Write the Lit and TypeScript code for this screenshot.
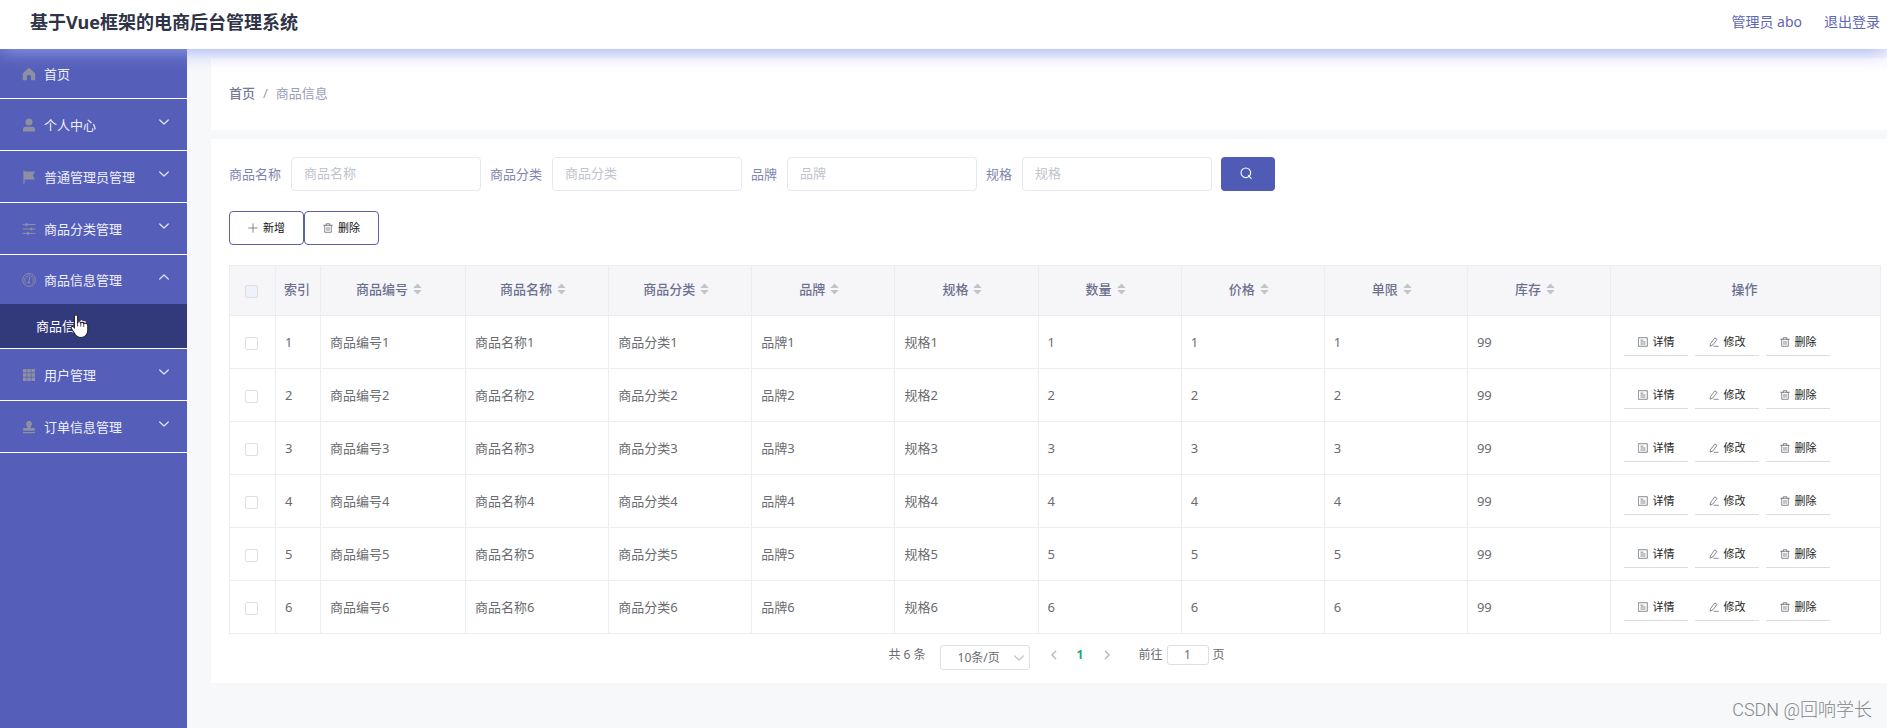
import { LitElement, html, css, svg } from "lit";
import { customElement, state } from "lit/decorators.js";

interface MenuItem {
  label: string;
  icon: string;
  open?: boolean;
  leaf?: boolean;
  children?: string[];
}

const MENU: MenuItem[] = [
  { label: "首页", icon: "home", leaf: true },
  { label: "个人中心", icon: "user" },
  { label: "普通管理员管理", icon: "flag" },
  { label: "商品分类管理", icon: "sliders" },
  { label: "商品信息管理", icon: "gauge", open: true, children: ["商品信息"] },
  { label: "用户管理", icon: "grid" },
  { label: "订单信息管理", icon: "stamp" },
];

const FILTERS = ["商品名称", "商品分类", "品牌", "规格"];
const COLUMNS = ["商品编号", "商品名称", "商品分类", "品牌", "规格", "数量", "价格", "单限", "库存"];
const ROWS = [1, 2, 3, 4, 5, 6].map((n) => [
  `商品编号${n}`, `商品名称${n}`, `商品分类${n}`, `品牌${n}`, `规格${n}`, `${n}`, `${n}`, `${n}`, "99",
]);

const stroke = (d: string, w = 1) => svg`<path d=${d} fill="none" stroke="currentColor" stroke-width=${w} stroke-linecap="round" stroke-linejoin="round"/>`;
const fill = (d: string) => svg`<path d=${d} fill="currentColor"/>`;

const GLYPHS: Record<string, unknown> = {
  home: fill("M7 .8 13.2 6.2V13.2H9V9.4Q9 8 7 8 5 8 5 9.4V13.2H.8V6.2Z"),
  user: svg`<circle cx="7" cy="4" r="3.5" fill="currentColor"/>${fill("M1 13.4V11.6Q1 8.8 3.6 8.8H10.4Q13 8.8 13 11.6V13.4Z")}`,
  flag: fill("M1.4 .4H2.6V1.4H13L10.8 5.4 13 9.4H2.6V13.8H1.4Z"),
  sliders: svg`${stroke("M1 2.6H13M1 7H13M1 11.4H13", 1)}${stroke("M4.5 2V3.2M9.5 6.4V7.6M6 10.8V12", 2)}`,
  gauge: svg`<circle cx="7" cy="7" r="6.4" fill="none" stroke="currentColor"/>${stroke("M4 10.4A4.4 4.4 0 1 1 10 10.4", 0.8)}${stroke("M7.6 4.4 7 9", 1)}<circle cx="6.6" cy="9.6" r="1.1" fill="currentColor"/>`,
  grid: fill("M1 1H4.6V4.6H1ZM5.2 1H8.8V4.6H5.2ZM9.4 1H13V4.6H9.4ZM1 5.2H4.6V8.8H1ZM5.2 5.2H8.8V8.8H5.2ZM9.4 5.2H13V8.8H9.4ZM1 9.4H4.6V13H1ZM5.2 9.4H8.8V13H5.2ZM9.4 9.4H13V13H9.4Z"),
  stamp: fill("M7 .8A3 3 0 0 1 9.4 5.6Q8.4 7 8.8 8H12.8V10.8H1.2V8H5.2Q5.6 7 4.6 5.6A3 3 0 0 1 7 .8ZM1 12H13V13.2H1Z"),
  down: stroke("M2 4.6 7 9.4 12 4.6", 1.4),
  up: stroke("M2 9.4 7 4.6 12 9.4", 1.4),
  left: stroke("M9 2.5 4.5 7 9 11.5", 1.6),
  right: stroke("M5 2.5 9.5 7 5 11.5", 1.6),
  search: svg`<circle cx="6.8" cy="6.8" r="5.6" fill="none" stroke="currentColor" stroke-width="1.3"/>${stroke("M9.8 10 13 13.2", 1.3)}`,
  plus: stroke("M7 1V13M1 7H13", 1.1),
  trash: svg`${stroke("M1 3.2H13M4.6 3.2V1H9.4V3.2M2.4 3.2V13H11.6V3.2M5.6 6V10.4M8.4 6V10.4", 1.1)}`,
  doc: stroke("M1 1H13V13H1ZM4 4.4H7M4 7H10M4 9.8H10", 1.1),
  edit: stroke("M2.4 9 8.2 1.2 11.2 3.4 5.6 11 2 12.6ZM7 13H13", 1.1),
};

const icon = (name: string, cls = "") =>
  html`<svg class="icon ${cls}" viewBox="0 0 14 14" aria-hidden="true">${GLYPHS[name]}</svg>`;

@customElement("app-root")
export class AppRoot extends LitElement {
  @state() private menu = MENU;

  static styles = css`
    :host {
      display: flex;
      flex-direction: column;
      min-height: 100vh;
      position: relative;
      background: #f6f8fa;
      font-family: "Noto Sans", "Noto Sans CJK SC", sans-serif;
      font-size: 13px;
      line-height: 20px;
      color: #6a6c70;
    }
    * { box-sizing: border-box; }
    a { color: inherit; text-decoration: none; }
    button, input, select { font: inherit; color: inherit; margin: 0; }
    button { cursor: pointer; }
    .icon { width: 14px; height: 14px; flex: none; display: block; }

    .top {
      display: flex;
      align-items: center;
      justify-content: space-between;
      height: 49px;
      padding: 0 7px 5px 30px;
      background: #fff;
      box-shadow: 0 1px 20px #98a5f6;
      position: relative;
      z-index: 1;
    }
    h1 { margin: 0; font-size: 18px; line-height: 24px; font-weight: 700; color: #2e3348; }
    .account { display: flex; gap: 22px; font-size: 14px; color: #5f67b4; }

    .body { display: flex; flex: 1; }
    .side { width: 187px; flex: none; background: #555fb9; }
    .menu, .sub { list-style: none; margin: 0; padding: 0; }
    .item { border-bottom: 1px solid #fff; }
    .entry {
      display: flex;
      align-items: center;
      gap: 8px;
      width: 100%;
      height: 51px;
      padding: 1px 17px 0 22px;
      border: 0;
      background: none;
      color: #eef0fb;
      text-align: left;
    }
    .entry.leaf { height: 49px; }
    .entry.open { height: 49px; }
    .entry .icon { color: #8d90a0; }
    .entry .arrow { width: 12px; height: 12px; margin: 0 0 6px auto; color: #e2e5fa; }
    .sub a {
      display: block;
      position: relative;
      height: 44px;
      padding: 0 36px;
      line-height: 44px;
      background: #323a7c;
      color: #fff;
    }
    .pointer { position: absolute; left: 70px; top: 10px; width: 19px; height: 25px; }

    main { flex: 1; min-width: 0; padding: 9px 0 45px 24px; display: flex; flex-direction: column; gap: 9px; }
    .card { background: #fff; }
    .crumbs { display: flex; gap: 8px; padding: 25px 18px 27px; color: #97a0b8; }
    .crumbs a { color: #747a96; font-weight: 500; }
    .list { flex: 1; padding: 18px 6px 12px 18px; }

    .filters { display: flex; flex-wrap: wrap; gap: 9px; }
    .field { display: flex; align-items: center; gap: 10px; color: #7c86b0; }
    .field input {
      width: 190px;
      height: 34px;
      padding: 0 12px 2px;
      border: 1px solid #e6e8f2;
      border-radius: 4px;
      background: #fff;
      outline: 0;
    }
    .field input::placeholder { color: #c0c4cc; opacity: 1; }
    .search {
      display: grid;
      place-items: center;
      width: 54px;
      height: 34px;
      padding: 0 4px 2px 0;
      border: 0;
      border-radius: 4px;
      background: #505bb5;
      color: #fff;
    }
    .icon.small { width: 12px; height: 12px; }
    .icon.tiny { width: 10px; height: 10px; color: #666a70; }

    .tools { display: flex; margin: 20px 0; }
    .tool {
      display: flex;
      align-items: center;
      justify-content: center;
      gap: 5px;
      width: 75px;
      height: 34px;
      padding: 0;
      border: 1px solid #5a61a8;
      border-radius: 4px;
      background: #fff;
      font-size: 11px;
      color: #111;
    }

    table { width: 100%; table-layout: fixed; border-collapse: collapse; }
    th, td { border: 1px solid #ebeef0; padding: 0 9px; text-align: left; font-weight: 400; }
    th { height: 50px; padding: 0 8px 3px 6px; background: #f6f6f9; color: #6d7190; font-weight: 500; text-align: center; white-space: nowrap; }
    td { height: 53px; }
    .pick { width: 46px; padding: 0 11px 0 8px; }
    .index { width: 45px; }
    .first { width: 145px; }
    .ops { width: 270px; }
    .sort { display: inline-flex; align-items: center; gap: 5px; padding-right: 6px; }
    .caret { width: 9px; height: 12px; color: #c0c4cc; }
    input[type="checkbox"] {
      appearance: none;
      display: block;
      width: 13px;
      height: 13px;
      margin: 2px auto 0;
      border: 1px solid #dcdfe6;
      border-radius: 2px;
      background: #fff;
    }
    th input[type="checkbox"] { background: #edf2fc; }
    .actions { display: flex; gap: 7px; padding-left: 4px; }
    .action {
      display: flex;
      align-items: center;
      justify-content: center;
      gap: 5px;
      width: 64px;
      height: 28px;
      padding: 0;
      border: 0;
      border-bottom: 1px solid #dcdde4;
      background: none;
      font-size: 11px;
      color: #1c1e22;
    }

    .pager { display: flex; justify-content: center; align-items: flex-start; padding: 11px 0 0 3px; font-size: 12px; }
    .pager .gap { margin-right: 14px; }
    .size { position: relative; display: block; margin-right: 18px; }
    .size select {
      appearance: none;
      display: block;
      width: 90px;
      height: 25px;
      padding: 0 22px 0 17px;
      border: 1px solid #dcdfe6;
      border-radius: 3px;
      background: #fff;
    }
    .size .icon { position: absolute; right: 5px; top: 7px; width: 12px; height: 12px; color: #c0c4cc; }
    .turn { display: grid; place-items: center; width: 12px; height: 20px; padding: 0; border: 0; background: none; color: #b4b8c0; }
    .page { width: 41px; text-align: center; font-weight: 700; color: #1ba784; }
    .jump { display: flex; gap: 4px; margin-left: 26px; }
    .jump input {
      width: 42px;
      height: 20px;
      padding: 0;
      border: 1px solid #dcdfe6;
      border-radius: 3px;
      text-align: center;
      background: #fff;
    }
    .mark {
      position: absolute;
      right: 15px;
      bottom: 6px;
      font: 300 18px/24px Roboto, "Noto Sans CJK SC", sans-serif;
      color: #85878b;
    }
  `;

  private renderItem(item: MenuItem) {
    const kind = item.leaf ? "leaf" : item.open ? "open" : "";
    return html`<li class="item">
      <button class="entry ${kind}" aria-expanded=${item.open ? "true" : "false"}>
        ${icon(item.icon)}<span>${item.label}</span>
        ${item.leaf ? "" : icon(item.open ? "up" : "down", "arrow")}
      </button>
      ${item.children
        ? html`<ul class="sub">${item.children.map((c) => html`<li><a href="#">${c}${this.renderPointer()}</a></li>`)}</ul>`
        : ""}
    </li>`;
  }

  private renderPointer() {
    return html`<svg class="pointer" viewBox="0 0 18 25" preserveAspectRatio="none" aria-hidden="true">
      <path d="M4.2 2.6C4.2 .6 7.2 .6 7.2 2.6V8.4C8 7.4 9.8 7.6 10.2 8.8 11.2 8 12.6 8.4 13 9.6 14.4 9 16.8 9.6 16.8 11.6V16.4C16.8 20.6 14 23.4 10.4 23.4 6.8 23.4 5.4 21.6 4.2 19.2L1.2 14.6C.4 13 2.2 11.8 3.4 13L4.2 13.8Z" fill="#fff" stroke="#22242c"/>
      <path d="M7.2 8.4V12.4M10.2 9V12.6M13 9.8V13" stroke="#22242c" stroke-width=".8" fill="none"/>
    </svg>`;
  }

  render() {
    return html`
      <header class="top">
        <h1>基于Vue框架的电商后台管理系统</h1>
        <div class="account"><span>管理员 abo</span><a href="#">退出登录</a></div>
      </header>
      <div class="body">
        <nav class="side"><ul class="menu">${this.menu.map((m) => this.renderItem(m))}</ul></nav>
        <main>
          <nav class="card crumbs"><a href="#">首页</a><span>/</span><span>商品信息</span></nav>
          <section class="card list">
            <form class="filters">
              ${FILTERS.map((f) => html`<label class="field">${f}<input type="text" placeholder=${f} /></label>`)}
              <button class="search" type="button" aria-label="查询">${icon("search", "small")}</button>
            </form>
            <div class="tools">
              <button class="tool">${icon("plus", "tiny")}新增</button>
              <button class="tool">${icon("trash", "tiny")}删除</button>
            </div>
            <table>
              <thead>
                <tr>
                  <th class="pick"><input type="checkbox" aria-label="全选" /></th>
                  <th class="index">索引</th>
                  ${COLUMNS.map((c, i) => html`<th class=${i === 0 ? "first" : ""}>
                    <span class="sort">${c}<svg class="caret" viewBox="0 0 9 12" aria-hidden="true"><path d="M4.5 .5 8.8 5H.2ZM4.5 11.5 8.8 7H.2Z" fill="currentColor"/></svg></span>
                  </th>`)}
                  <th class="ops">操作</th>
                </tr>
              </thead>
              <tbody>
                ${ROWS.map((r, i) => html`<tr>
                  <td class="pick"><input type="checkbox" aria-label="选择第${i + 1}行" /></td>
                  <td>${i + 1}</td>
                  ${r.map((v) => html`<td>${v}</td>`)}
                  <td><div class="actions">
                    <button class="action">${icon("doc", "tiny")}详情</button>
                    <button class="action">${icon("edit", "tiny")}修改</button>
                    <button class="action">${icon("trash", "tiny")}删除</button>
                  </div></td>
                </tr>`)}
              </tbody>
            </table>
            <div class="pager">
              <span class="gap">共 6 条</span>
              <label class="size"><select aria-label="每页条数"><option>10条/页</option></select>${icon("down")}</label>
              <button class="turn" aria-label="上一页">${icon("left", "small")}</button>
              <span class="page">1</span>
              <button class="turn" aria-label="下一页">${icon("right", "small")}</button>
              <label class="jump">前往<input type="text" value="1" />页</label>
            </div>
          </section>
        </main>
      </div>
      <div class="mark">CSDN @回响学长</div>
    `;
  }
}
